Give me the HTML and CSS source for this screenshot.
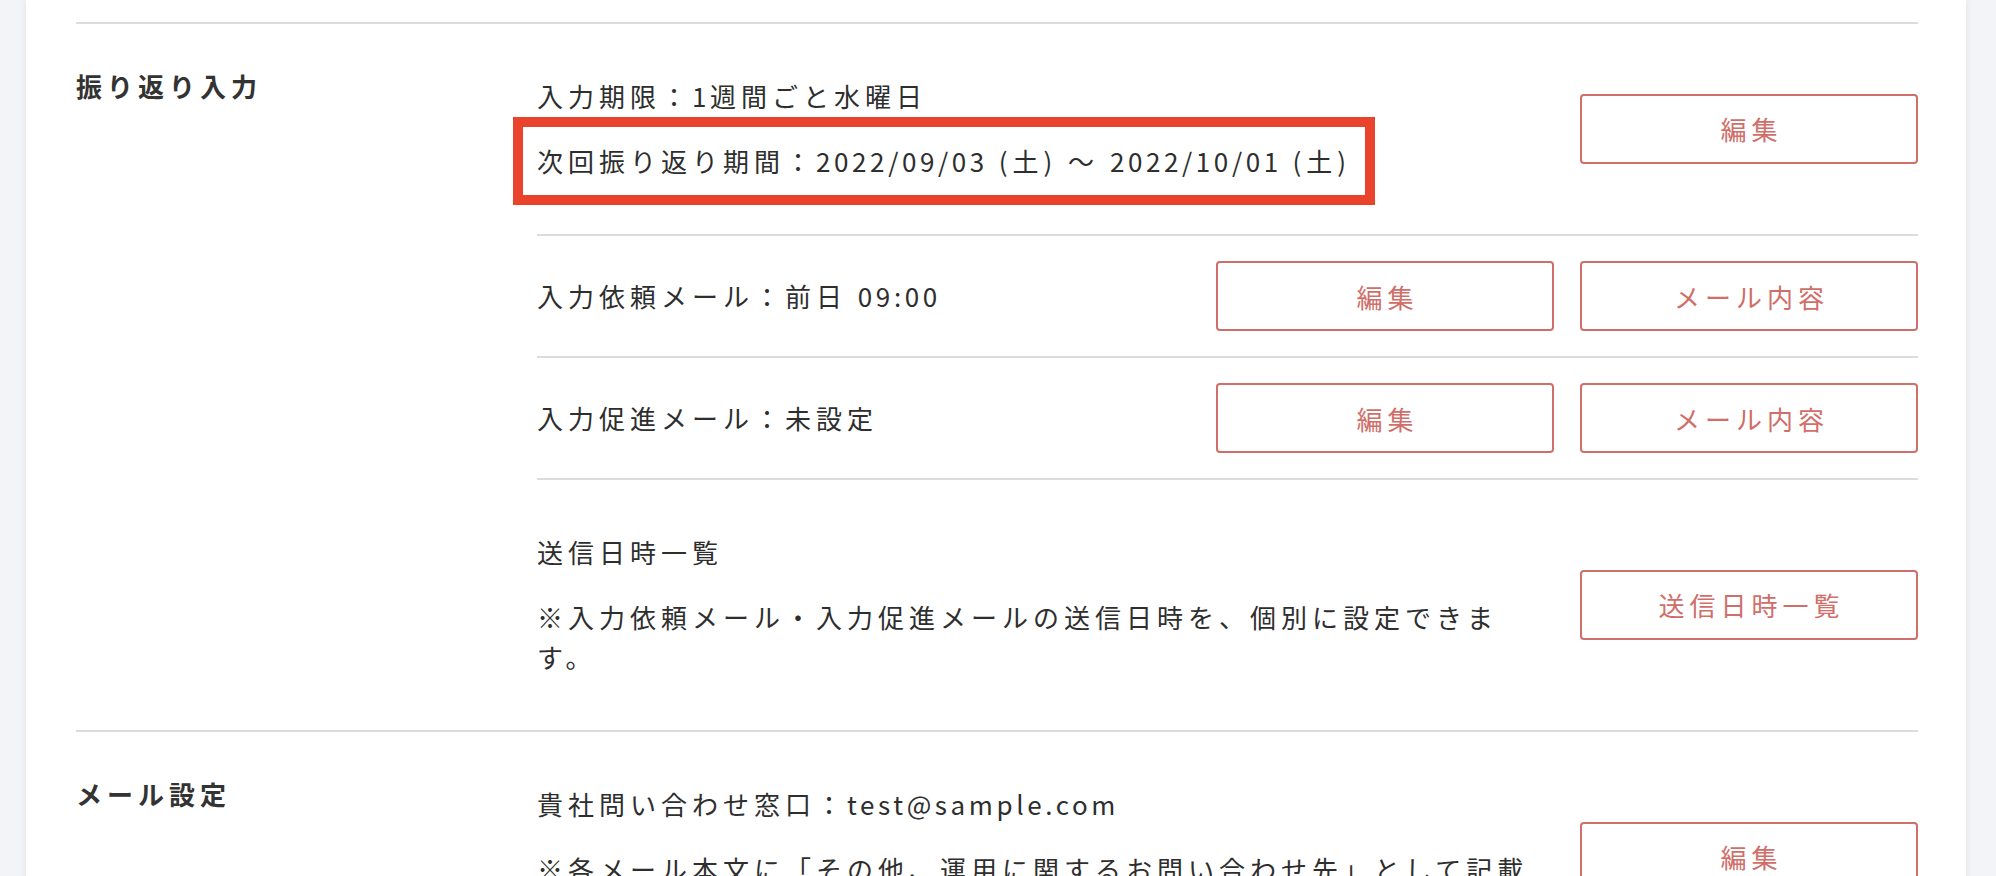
FILE: index.html
```html
<!DOCTYPE html>
<html lang="ja">

<head>
    <meta charset="UTF-8">
    <meta name="viewport" content="width=device-width, initial-scale=1.0">
    <title>振り返り設定</title>
    <link rel="stylesheet" href="styles.css">
</head>

<body>
    <div class="card">
        <section class="setting">
            <h2 class="setting-title">振り返り入力</h2>
            <div class="setting-body">
                <div class="item item-tall">
                    <div class="item-text">
                        <p>入力期限：<span class="latin">1</span>週間ごと水曜日</p>
                        <p><span class="highlight">次回振り返り期間：<span class="latin">2022/09/03</span> (土) 〜 <span class="latin">2022/10/01</span> (土)</span></p>
                    </div>
                    <div class="item-actions">
                        <button class="btn">編集</button>
                    </div>
                </div>
                <div class="item">
                    <div class="item-text">
                        <p>入力依頼メール：前日 <span class="latin">09:00</span></p>
                    </div>
                    <div class="item-actions">
                        <button class="btn">編集</button>
                        <button class="btn">メール内容</button>
                    </div>
                </div>
                <div class="item">
                    <div class="item-text">
                        <p>入力促進メール：未設定</p>
                    </div>
                    <div class="item-actions">
                        <button class="btn">編集</button>
                        <button class="btn">メール内容</button>
                    </div>
                </div>
                <div class="item item-tall">
                    <div class="item-text">
                        <p>送信日時一覧</p>
                        <p>※入力依頼メール・入力促進メールの送信日時を、個別に設定できます。</p>
                    </div>
                    <div class="item-actions">
                        <button class="btn">送信日時一覧</button>
                    </div>
                </div>
            </div>
        </section>
        <section class="setting">
            <h2 class="setting-title">メール設定</h2>
            <div class="setting-body">
                <div class="item item-tall">
                    <div class="item-text">
                        <p>貴社問い合わせ窓口：<span class="latin">test@sample.com</span></p>
                        <p>※各メール本文に「その他、運用に関するお問い合わせ先」として記載されます。</p>
                    </div>
                    <div class="item-actions">
                        <button class="btn">編集</button>
                    </div>
                </div>
            </div>
        </section>
    </div>
</body>

</html>
```

FILE: styles.css
```css
body {
    font-family: 'Noto Sans CJK JP', sans-serif;
    background-color: #f3f4f8;
    color: #2e2e2e;
    margin: 0;
    padding: 0 30px 0 26px;
    font-size: 26px;
    letter-spacing: 5px;
}

.card {
    background: #fff;
    min-height: 1200px;
    padding: 22px 48px 0 50px;
    box-shadow: 0 0 8px rgba(0, 0, 0, 0.08);
}

.setting {
    display: grid;
    grid-template-columns: 461px 1fr;
    border-top: 2px solid #dcdcdc;
}

.setting-title {
    margin: 0;
    padding-top: 42px;
    font-size: 26px;
    line-height: 40px;
    font-weight: bold;
    color: #333;
}

.item {
    display: flex;
    align-items: center;
    padding: 25px 0;
    border-bottom: 2px solid #dcdcdc;
}

.item:last-child {
    border-bottom: none;
}

.item-tall {
    padding: 52px 0 53px;
}

.item-text {
    flex: 1;
    display: flex;
    flex-direction: column;
    gap: 25px;
    margin-right: 40px;
}

.item-text p {
    margin: 0;
    line-height: 40px;
}

/* 英数字は字間を詰める */
.latin {
    letter-spacing: 3.6px;
}

.highlight {
    display: inline-block;
    outline: 10px solid #e9432b;
    outline-offset: 14px;
}

.item-actions {
    display: flex;
    justify-content: flex-end;
    gap: 26px;
}

.btn {
    width: 338px;
    height: 70px;
    padding: 0 0 0 5px;
    background: #fff;
    border: 2px solid #d06e69;
    border-radius: 4px;
    color: #d06e69;
    font-family: inherit;
    font-size: 26px;
    letter-spacing: 5px;
    cursor: pointer;
}
```
